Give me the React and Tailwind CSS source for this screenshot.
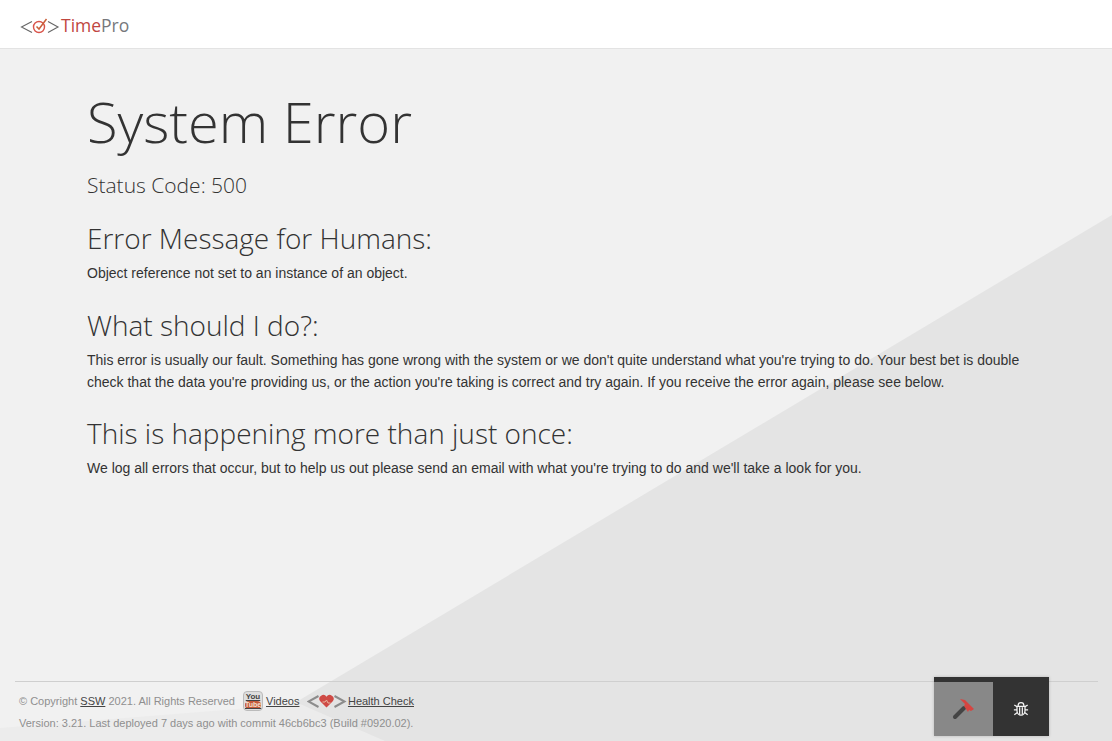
const sans = { fontFamily: '"Liberation Sans", Arial, sans-serif' }

function Logo() {
  return (
    <div className="flex items-center">
      <svg width="40" height="20" viewBox="0 0 40 20" fill="none">
        <path d="M12 5.5 L1.5 11 L12 16.5" stroke="#666" strokeWidth="1.1" />
        <path d="M28 5.5 L38 11 L28 16.5" stroke="#666" strokeWidth="1.1" />
        <circle cx="19" cy="11" r="5.5" stroke="#d9534a" strokeWidth="1.4" />
        <path d="M16.5 10.5 L19 13 L26.5 3" stroke="#c9603a" strokeWidth="1.5" />
      </svg>
      <span className="ml-[1px] text-[17.5px] leading-none text-[#c0463f] font-['Open_Sans',sans-serif]">
        Time<span className="text-[#77787c]">Pro</span>
      </span>
    </div>
  )
}

function HammerIcon() {
  return (
    <svg width="24" height="24" viewBox="0 0 24 24" fill="none">
      <path d="M3 20 L12 11" stroke="#444" strokeWidth="4" strokeLinecap="round" />
      <path d="M8 2 L13 3 L22 12 L19 14 L17 13 L16 15 L12 9 L13 7 Z" fill="#d64541" />
    </svg>
  )
}

function BugIcon() {
  return (
    <svg width="16" height="16" viewBox="0 0 18 18" fill="none" stroke="#f5f5f5" strokeWidth="1.4">
      <path d="M5.8 6 V5 A3.2 3.2 0 0 1 12.2 5 V6" />
      <path d="M4.5 6 H13.5 V11 A4.5 5 0 0 1 4.5 11 Z" />
      <path d="M7.5 7 V15 M10.5 7 V15 M1.5 4.5 L4.5 6.5 M16.5 4.5 L13.5 6.5 M1 10 H4.5 M17 10 H13.5 M1.5 15.5 L5 13 M16.5 15.5 L13 13" />
    </svg>
  )
}

function YoutubeIcon() {
  return (
    <span className="inline-flex h-[20px] w-[20px] flex-col items-center rounded-sm border border-[#bbb] bg-[#dedede]">
      <span className="text-[8px] leading-[9px] font-bold text-[#444]">You</span>
      <span className="w-[16px] rounded-sm bg-[#c4593a] text-center text-[7px] leading-[8px] font-bold text-[#f3e0d0]">Tube</span>
    </span>
  )
}

function HealthIcon() {
  return (
    <svg width="40" height="16" viewBox="0 0 40 16" fill="none">
      <path d="M11.5 3 L1.5 8.5 L11.5 14" stroke="#8c8c8c" strokeWidth="2" />
      <path d="M27.5 3 L37.5 8.5 L27.5 14" stroke="#8c8c8c" strokeWidth="2" />
      <path d="M19.5 14.5 L13 8 A3.6 3.6 0 0 1 19.5 3.8 A3.6 3.6 0 0 1 26 8 Z" fill="#cf4a45" />
      <path d="M15.5 9 H18 L19.5 7 L21 10 H23.5" stroke="#e6b8a0" strokeWidth="1" />
    </svg>
  )
}

export default function App() {
  return (
    <div className="relative flex h-[741px] flex-col overflow-hidden bg-[#f1f1f1]" style={sans}>
      {/* fondo diagonal */}
      <div className="absolute inset-0 bg-[#e4e4e4] [clip-path:polygon(100%_215px,100%_100%,231px_100%)]" />
      <div className="absolute inset-0 bg-[#ececec] [clip-path:polygon(0px_728px,300px_704px,385px_100%,0px_100%)]" />

      <header className="relative flex h-[49px] shrink-0 items-center border-b border-[#e3e3e3] bg-white pl-[20px] pt-[4px]">
        <Logo />
      </header>

      <main className="relative flex-1 pl-[87px] pr-[80px] text-[14px] leading-[22px] text-[#333]">
        <h1 className="mt-[34px] text-[56px] leading-[76px] font-light text-[#333] font-['Open_Sans',sans-serif]">System Error</h1>
        <h2 className="mt-[14px] text-[21px] leading-[24px] font-light text-[#333] font-['Open_Sans',sans-serif]">Status Code: 500</h2>

        <h3 className="mt-[23px] text-[28px] leading-[36px] font-light text-[#333] font-['Open_Sans',sans-serif]">Error Message for Humans:</h3>
        <p className="mt-[6px]">Object reference not set to an instance of an object.</p>

        <h3 className="mt-[23px] text-[28px] leading-[36px] font-light text-[#333] font-['Open_Sans',sans-serif]">What should I do?:</h3>
        <p className="mt-[6px]">
          This error is usually our fault. Something has gone wrong with the system or we don't quite understand what you're trying to do. Your best bet is double check that the data you're providing us, or the action you're taking is correct and try again. If you receive the error again, please see below.
        </p>

        <h3 className="mt-[22px] text-[28px] leading-[36px] font-light text-[#333] font-['Open_Sans',sans-serif]">This is happening more than just once:</h3>
        <p className="mt-[6px]">We log all errors that occur, but to help us out please send an email with what you're trying to do and we'll take a look for you.</p>
      </main>

      <footer className="relative mx-[15px] mb-[8px] w-[1083px] border-t border-[#cfcfcf] pl-[4px] pt-[9px] text-[11px] leading-[20px] text-[#8f8f8f]">
        <div className="flex h-[20px] items-center">
          <span>© Copyright <a className="text-[#444] underline">SSW</a> 2021. All Rights Reserved</span>
          <a className="ml-[8px] flex items-center text-[#444] underline"><YoutubeIcon /><span className="ml-[3px]">Videos</span></a>
          <span className="ml-[8px]"><HealthIcon /></span>
          <a className="ml-[0.5px] text-[#444] underline">Health Check</a>
        </div>
        <div className="mt-[2px]">Version: 3.21. Last deployed 7 days ago with commit 46cb6bc3 (Build #0920.02).</div>
      </footer>

      {/* botones flotantes */}
      <div className="absolute left-[934px] top-[677px] flex h-[59px] w-[115px] items-end bg-[#333] shadow-[0_0_3px_rgba(0,0,0,0.2)]">
        <button className="flex h-[54px] w-[59px] items-center justify-center bg-[#888]"><HammerIcon /></button>
        <button className="flex h-[54px] w-[56px] items-center justify-center"><BugIcon /></button>
      </div>
    </div>
  )
}
